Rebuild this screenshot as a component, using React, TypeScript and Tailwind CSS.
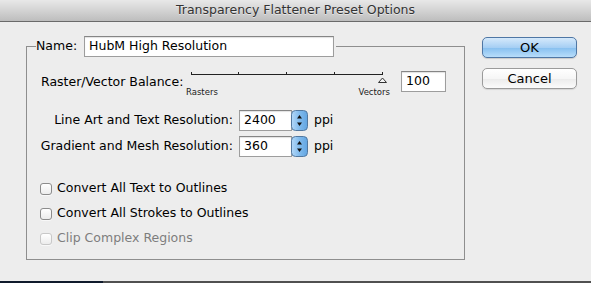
import React from "react";

const ui = "font-['DejaVu_Sans',sans-serif]";

function Spinner({ id }: { id: string }) {
  return (
    <svg width="17" height="21" viewBox="0 0 17 21" className="-ml-[1px] shrink-0">
      <defs>
        <linearGradient id={id} x1="0" y1="0" x2="1" y2="0">
          <stop offset="0" stopColor="#b3d8f8" />
          <stop offset="0.5" stopColor="#80baec" />
          <stop offset="1" stopColor="#62a5e2" />
        </linearGradient>
      </defs>
      <rect x="0.5" y="0.5" width="16" height="20" rx="4" fill={`url(#${id})`} stroke="#52789f" />
      <path d="M8.5 5 L6 8.5 L11 8.5 Z" fill="#111" />
      <path d="M8.5 16 L6 12.5 L11 12.5 Z" fill="#111" />
    </svg>
  );
}

function TextBox({ value, className }: { value: string; className: string }) {
  return (
    <div
      className={`flex h-[21px] shrink-0 items-center border border-[#9d9d9d] border-t-[#858585] bg-white pl-[4px] text-[12.5px] text-black shadow-[inset_0_1px_1px_rgba(0,0,0,0.12)] ${className}`}
    >
      {value}
    </div>
  );
}

function Check({ label, disabled }: { label: string; disabled?: boolean }) {
  return (
    <div className="flex h-[25px] items-center gap-[5px] -ml-px whitespace-nowrap">
      <span
        className={`h-[12px] w-[12px] rounded-[3px] border bg-[linear-gradient(#ffffff,#ececec)] shadow-[0_1px_0_rgba(255,255,255,0.6)] ${
          disabled ? "border-[#c8c8c8]" : "border-[#8c8c8c]"
        }`}
      />
      <span className={disabled ? "text-[#7d7d7d]" : "text-black"}>{label}</span>
    </div>
  );
}

function ResRow({ label, value }: { label: string; value: string }) {
  return (
    <div className="flex items-center">
      <div className="flex w-[192px] shrink-0 justify-end whitespace-nowrap">{label}</div>
      <TextBox value={value} className="ml-[6px] w-[53px]" />
      <Spinner id={`sp${value}`} />
      <span className="ml-[6px]">ppi</span>
    </div>
  );
}

export default function App() {
  return (
    <div className={`flex h-[283px] w-[591px] flex-col overflow-hidden bg-[#ededed] ${ui}`}>
      <div className="flex h-[22px] shrink-0 items-center justify-center border-b border-[#6a6a6a] bg-[linear-gradient(#e8e8e8,#d3d3d3_50%,#bdbdbd)] text-[12.5px] text-[#333] [text-shadow:0_1px_0_rgba(255,255,255,0.5)]">
        Transparency Flattener Preset Options
      </div>

      <div className="flex flex-1 text-[12.5px] text-black">
        <fieldset className="ml-[26px] mt-[14px] h-[224px] w-[439px] shrink-0 border border-[#8e8e8e] pl-[14px]">
          <legend className="-ml-[5px] pr-[2px]">
            <span className="flex items-center gap-[7px]">
              <span>Name:</span>
              <TextBox value="HubM High Resolution" className="w-[250px]" />
            </span>
          </legend>

          <div className="mt-[14px] flex items-start">
            <div className="h-[21px] w-[145px] shrink-0 whitespace-nowrap leading-[21px]">Raster/Vector Balance:</div>
            <div className="w-[204px] shrink-0">
              <svg width="204" height="14" viewBox="0 0 204 14" className="block">
                <line x1="5" y1="3.5" x2="196" y2="3.5" stroke="#222" />
                {[5, 52, 100, 148, 196].map((x) => (
                  <line key={x} x1={x + 0.5} y1="1" x2={x + 0.5} y2="4" stroke="#222" />
                ))}
                <path d="M196.5 7 L192.5 11.5 L200.5 11.5 Z" fill="#f4f4f4" stroke="#333" />
              </svg>
              <div className="flex justify-between text-[8.5px] leading-[14px] text-[#222]">
                <span>Rasters</span>
                <span>Vectors</span>
              </div>
            </div>
            <TextBox value="100" className="ml-[11px] w-[45px]" />
          </div>

          <div className="mt-[11px] flex flex-col gap-[5px]">
            <ResRow label="Line Art and Text Resolution:" value="2400" />
            <ResRow label="Gradient and Mesh Resolution:" value="360" />
          </div>

          <div className="mt-[19px] flex flex-col">
            <Check label="Convert All Text to Outlines" />
            <Check label="Convert All Strokes to Outlines" />
            <Check label="Clip Complex Regions" disabled />
          </div>
        </fieldset>

        <div className="ml-[17px] mt-[15px] flex flex-col gap-[10px]">
          <button className="h-[21px] w-[95px] rounded-[5px] border border-[#4f77a5] bg-[linear-gradient(#d5e9fb,#a6cff4_50%,#86bfef_51%,#b8ddfa)] text-[13px] leading-none text-black shadow-[0_1px_1px_rgba(0,0,0,0.15)]">
            OK
          </button>
          <button className="h-[21px] w-[95px] rounded-[5px] border border-[#9b9b9b] bg-[linear-gradient(#ffffff,#f6f6f6_50%,#ebebeb_51%,#fbfbfb)] text-[13px] leading-none text-black shadow-[0_1px_1px_rgba(0,0,0,0.1)]">
            Cancel
          </button>
        </div>
      </div>

      <div className="flex h-[2px] shrink-0">
        <div className="w-[103px] bg-[#0f1a2c]" />
        <div className="flex-1 bg-[#505050]" />
      </div>
    </div>
  );
}
